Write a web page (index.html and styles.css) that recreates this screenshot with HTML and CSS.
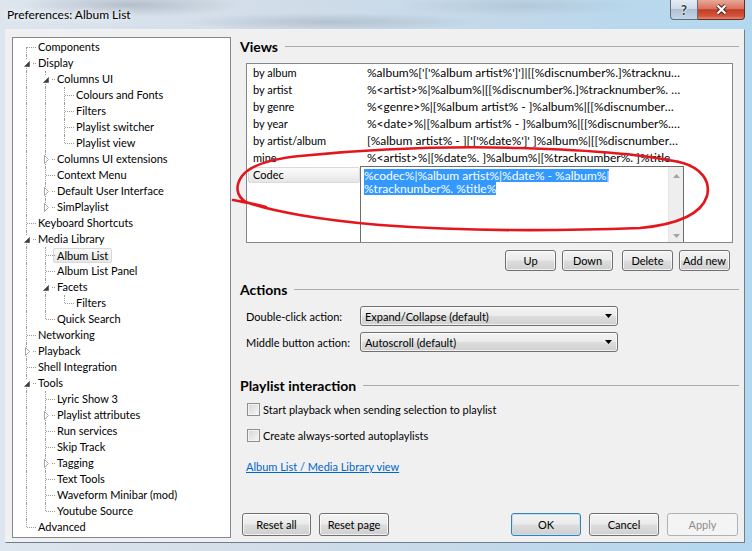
FILE: index.html
```html
<!DOCTYPE html>
<html lang="en">
<head>
    <meta charset="UTF-8">
    <title>Preferences: Album List</title>
    <link rel="stylesheet" href="styles.css">
</head>
<body>
<div class="window">
    <div class="titlebar">
        <span class="title">Preferences: Album List</span>
        <div class="caption">
            <span class="cap-btn help">?</span>
            <span class="cap-btn close">
                <svg width="13" height="11" viewBox="0 0 13 11"><path d="M2.5 1.5 L10.5 9.5 M10.5 1.5 L2.5 9.5" stroke="#4a2520" stroke-width="4"/><path d="M2.5 1.5 L10.5 9.5 M10.5 1.5 L2.5 9.5" stroke="#fff" stroke-width="2.2"/></svg>
            </span>
        </div>
    </div>

    <div class="client">
        <div class="tree">
            <div class="node"><i class="c first"></i><span class="t">Components</span></div>
            <div class="node"><i class="c"><span class="exp"><svg width="10" height="9"><path d="M6.5 2.5 L6.5 7.5 L1.5 7.5 Z" fill="#3c3c3c" stroke="#5a5a5a" stroke-width="0.8"/></svg></span></i><span class="t">Display</span></div>
            <div class="node"><i class="g"></i><i class="c"><span class="exp"><svg width="10" height="9"><path d="M6.5 2.5 L6.5 7.5 L1.5 7.5 Z" fill="#3c3c3c" stroke="#5a5a5a" stroke-width="0.8"/></svg></span></i><span class="t">Columns UI</span></div>
            <div class="node"><i class="g"></i><i class="g"></i><i class="c"></i><span class="t">Colours and Fonts</span></div>
            <div class="node"><i class="g"></i><i class="g"></i><i class="c"></i><span class="t">Filters</span></div>
            <div class="node"><i class="g"></i><i class="g"></i><i class="c"></i><span class="t">Playlist switcher</span></div>
            <div class="node"><i class="g"></i><i class="g"></i><i class="c last"></i><span class="t">Playlist view</span></div>
            <div class="node"><i class="g"></i><i class="c"><span class="exp"><svg width="10" height="9"><path d="M2.5 0.5 L6.5 4.5 L2.5 8.5 Z" fill="#fff" stroke="#a6a6a6"/></svg></span></i><span class="t">Columns UI extensions</span></div>
            <div class="node"><i class="g"></i><i class="c"></i><span class="t">Context Menu</span></div>
            <div class="node"><i class="g"></i><i class="c"><span class="exp"><svg width="10" height="9"><path d="M2.5 0.5 L6.5 4.5 L2.5 8.5 Z" fill="#fff" stroke="#a6a6a6"/></svg></span></i><span class="t">Default User Interface</span></div>
            <div class="node"><i class="g"></i><i class="c last"><span class="exp"><svg width="10" height="9"><path d="M2.5 0.5 L6.5 4.5 L2.5 8.5 Z" fill="#fff" stroke="#a6a6a6"/></svg></span></i><span class="t">SimPlaylist</span></div>
            <div class="node"><i class="c"></i><span class="t">Keyboard Shortcuts</span></div>
            <div class="node"><i class="c"><span class="exp"><svg width="10" height="9"><path d="M6.5 2.5 L6.5 7.5 L1.5 7.5 Z" fill="#3c3c3c" stroke="#5a5a5a" stroke-width="0.8"/></svg></span></i><span class="t">Media Library</span></div>
            <div class="node"><i class="g"></i><i class="c"></i><span class="t sel">Album List</span></div>
            <div class="node"><i class="g"></i><i class="c"></i><span class="t">Album List Panel</span></div>
            <div class="node"><i class="g"></i><i class="c"><span class="exp"><svg width="10" height="9"><path d="M6.5 2.5 L6.5 7.5 L1.5 7.5 Z" fill="#3c3c3c" stroke="#5a5a5a" stroke-width="0.8"/></svg></span></i><span class="t">Facets</span></div>
            <div class="node"><i class="g"></i><i class="g"></i><i class="c last"></i><span class="t">Filters</span></div>
            <div class="node"><i class="g"></i><i class="c last"></i><span class="t">Quick Search</span></div>
            <div class="node"><i class="c"></i><span class="t">Networking</span></div>
            <div class="node"><i class="c"><span class="exp"><svg width="10" height="9"><path d="M2.5 0.5 L6.5 4.5 L2.5 8.5 Z" fill="#fff" stroke="#a6a6a6"/></svg></span></i><span class="t">Playback</span></div>
            <div class="node"><i class="c"></i><span class="t">Shell Integration</span></div>
            <div class="node"><i class="c"><span class="exp"><svg width="10" height="9"><path d="M6.5 2.5 L6.5 7.5 L1.5 7.5 Z" fill="#3c3c3c" stroke="#5a5a5a" stroke-width="0.8"/></svg></span></i><span class="t">Tools</span></div>
            <div class="node"><i class="g"></i><i class="c"></i><span class="t">Lyric Show 3</span></div>
            <div class="node"><i class="g"></i><i class="c"><span class="exp"><svg width="10" height="9"><path d="M2.5 0.5 L6.5 4.5 L2.5 8.5 Z" fill="#fff" stroke="#a6a6a6"/></svg></span></i><span class="t">Playlist attributes</span></div>
            <div class="node"><i class="g"></i><i class="c"></i><span class="t">Run services</span></div>
            <div class="node"><i class="g"></i><i class="c"></i><span class="t">Skip Track</span></div>
            <div class="node"><i class="g"></i><i class="c"><span class="exp"><svg width="10" height="9"><path d="M2.5 0.5 L6.5 4.5 L2.5 8.5 Z" fill="#fff" stroke="#a6a6a6"/></svg></span></i><span class="t">Tagging</span></div>
            <div class="node"><i class="g"></i><i class="c"></i><span class="t">Text Tools</span></div>
            <div class="node"><i class="g"></i><i class="c"></i><span class="t">Waveform Minibar (mod)</span></div>
            <div class="node"><i class="g"></i><i class="c last"></i><span class="t">Youtube Source</span></div>
            <div class="node"><i class="c last"></i><span class="t">Advanced</span></div>
        </div>

        <div class="pane">
            <div class="group-title">Views</div>
            <div class="views">
                <div class="vrow"><span class="vname">by album</span><span class="vfmt">%album%['['%album artist%']']|[[%discnumber%.]%tracknumber%. ][%track artist% - ]%title%</span></div>
                <div class="vrow"><span class="vname">by artist</span><span class="vfmt">%&lt;artist&gt;%|%album%|[[%discnumber%.]%tracknumber%. ][%track artist% - ]%title%</span></div>
                <div class="vrow"><span class="vname">by genre</span><span class="vfmt">%&lt;genre&gt;%|[%album artist% - ]%album%|[[%discnumber%.]%tracknumber%. ]%title%</span></div>
                <div class="vrow"><span class="vname">by year</span><span class="vfmt">%&lt;date&gt;%|[%album artist% - ]%album%|[[%discnumber%.]%tracknumber%. ]%title%</span></div>
                <div class="vrow"><span class="vname">by artist/album</span><span class="vfmt">[%album artist% - ]['['%date%']' ]%album%|[[%discnumber%.]%tracknumber%. ]%title%</span></div>
                <div class="vrow"><span class="vname">mine</span><span class="vfmt">%&lt;artist&gt;%|[%date%. ]%album%|[%tracknumber%. ]%title%|[%track artist%]</span></div>
                <div class="vrow editing">
                    <span class="vname sel">Codec</span>
                    <div class="edit">
                        <div class="edit-text"><span class="hl">%codec%|%album artist%|%date% - %album%|</span><br><span class="hl">%tracknumber%. %title%</span></div>
                        <div class="vscroll">
                            <svg width="7" height="4"><path d="M0 4 L3.5 0 L7 4 Z" fill="#a3a3a3"/></svg>
                            <svg width="7" height="4"><path d="M0 0 L3.5 4 L7 0 Z" fill="#a3a3a3"/></svg>
                        </div>
                    </div>
                </div>
            </div>
            <div class="list-buttons">
                <button class="btn">Up</button>
                <button class="btn">Down</button>
                <button class="btn delete">Delete</button>
                <button class="btn">Add new</button>
            </div>

            <div class="group-title actions">Actions</div>
            <div class="field first">
                <span class="field-label">Double-click action:</span>
                <div class="combo"><span>Expand/Collapse (default)</span><svg width="7" height="4"><path d="M0 0 L7 0 L3.5 4 Z" fill="#000"/></svg></div>
            </div>
            <div class="field">
                <span class="field-label">Middle button action:</span>
                <div class="combo"><span>Autoscroll (default)</span><svg width="7" height="4"><path d="M0 0 L7 0 L3.5 4 Z" fill="#000"/></svg></div>
            </div>

            <div class="group-title playlist">Playlist interaction</div>
            <div class="check first"><span class="box"></span>Start playback when sending selection to playlist</div>
            <div class="check"><span class="box"></span>Create always-sorted autoplaylists</div>
            <div class="link-row"><a class="link" href="#">Album List / Media Library view</a></div>

            <div class="dialog-buttons">
                <button class="btn wide reset-all">Reset all</button>
                <button class="btn wide">Reset page</button>
                <span class="spacer"></span>
                <button class="btn wide default">OK</button>
                <button class="btn wide">Cancel</button>
                <button class="btn wide disabled apply">Apply</button>
            </div>
        </div>
    </div>

    <svg class="markup" width="752" height="551" viewBox="0 0 752 551">
        <path d="M300 156 C270 159 250 166 242 176 C235 186 236 196 246 202 C270 211 320 220 380 225 C460 231 560 231 640 228 C682 224 702 212 707 196 C711 180 700 168 683 163 C650 155 590 150 520 148 C450 146 380 148 300 156 Z M233 200 C242 202 252 203 266 207" fill="none" stroke="#e3161e" stroke-width="2.6" stroke-linecap="round"/>
    </svg>
</div>
</body>
</html>
```

FILE: styles.css
```css
* {
    box-sizing: border-box;
}

body {
    margin: 0;
    font-family: Lato, "Liberation Sans", sans-serif;
    font-size: 11px;
    color: #000;
}

.window {
    position: relative;
    width: 752px;
    height: 551px;
    display: flex;
    flex-direction: column;
    padding: 0 7px 8px 5px;
    background:
        radial-gradient(ellipse 110px 12px at 130px 5px, rgba(140, 150, 165, 0.45), transparent),
        radial-gradient(ellipse 150px 9px at 330px 22px, rgba(130, 145, 160, 0.35), transparent),
        radial-gradient(ellipse 120px 10px at 520px 6px, rgba(150, 165, 180, 0.3), transparent),
        linear-gradient(to right, #dde5ee 0%, #d0dce8 40%, #c0d8ea 70%, #b2d8ef 100%);
}

/* title bar */
.titlebar {
    height: 29px;
    display: flex;
    justify-content: space-between;
}

.title {
    padding-left: 2px;
    line-height: 29px;
    font-size: 12px;
    text-shadow: 0 0 6px #fff, 0 0 10px #fff;
}

.caption {
    display: flex;
    height: 20px;
}

.cap-btn {
    display: flex;
    align-items: center;
    justify-content: center;
    height: 20px;
    border: 1px solid #5f6f80;
    border-top: 0;
}

.help {
    width: 28px;
    border-radius: 0 0 0 4px;
    background: linear-gradient(#e4ecf4 0%, #cfdae6 45%, #afc0d3 50%, #c4d5e6 100%);
    font-weight: bold;
    font-size: 13px;
    color: #2f3a46;
    text-shadow: 0 0 2px #fff, 0 0 2px #fff;
}

.close {
    width: 47px;
    border-left: 0;
    border-color: #6b2a20;
    border-radius: 0 0 4px 0;
    background: linear-gradient(#e9a898 0%, #d9725f 45%, #c33c22 52%, #d2573d 85%, #e28a6e 100%);
}

/* client area */
.client {
    flex: 1;
    display: flex;
    gap: 5px;
    padding: 7px 0 4px 6px;
    background: #f0f0f0;
    border: 1px solid;
    border-color: #eef2f6 #6e7e8f #6e7e8f #eef2f6;
}

.tree {
    flex: 0 0 219px;
    background: #fff;
    border: 1px solid #828790;
    padding: 1px 0 0 4px;
}

.node {
    display: flex;
    height: 16px;
    white-space: nowrap;
}

.g,
.c {
    position: relative;
    flex: 0 0 19px;
}

.g::before,
.c::before {
    content: "";
    position: absolute;
    left: 9px;
    top: 0;
    bottom: 0;
    border-left: 1px dotted #9a9a9a;
}

.c.first::before {
    top: 8px;
}

.c.last::before {
    bottom: 8px;
}

.c::after {
    content: "";
    position: absolute;
    left: 10px;
    right: 0;
    top: 8px;
    border-top: 1px dotted #9a9a9a;
}

.exp {
    position: absolute;
    left: 6px;
    top: 4px;
    width: 10px;
    height: 9px;
    background: #fff;
    z-index: 1;
}

.exp svg {
    display: block;
}

.t {
    padding: 0 2px;
    line-height: 16px;
}

.t.sel {
    margin: 1px 0 0 -2px;
    padding: 0 3px;
    height: 15px;
    line-height: 13px;
    border: 1px solid #d9d9d9;
    border-radius: 2px;
    background: linear-gradient(#fafafa, #e6e6e6);
}

/* right pane */
.pane {
    flex: 1;
    display: flex;
    flex-direction: column;
}

.group-title {
    display: flex;
    align-items: center;
    height: 18px;
    padding-left: 4px;
    margin-right: 5px;
    font-weight: bold;
    font-size: 14px;
}

.group-title::after {
    content: "";
    flex: 1;
    border-top: 1px solid #a9adb2;
    margin: 1px 0 0 7px;
}

.views {
    margin: 8px 0 0 10px;
    width: 487px;
    height: 180px;
    border: 1px solid #828790;
    background: #fff;
}

.vrow {
    display: grid;
    grid-template-columns: 113px 324px;
    height: 17px;
    line-height: 17px;
    white-space: nowrap;
}

.vname {
    padding-left: 6px;
}

.vfmt {
    padding: 0 3px 0 7px;
    font-size: 12px;
    overflow: hidden;
    text-overflow: ellipsis;
}

.vrow.editing {
    height: 76px;
    align-items: start;
}

.vname.sel {
    margin: 1px 0 0 1px;
    height: 16px;
    line-height: 14px;
    padding-left: 4px;
    border: 1px solid #dadada;
    border-radius: 2px;
    background: linear-gradient(#fbfbfb, #e6e6e6);
}

.edit {
    display: flex;
    height: 76px;
    border: 1px solid #6d6d6d;
    border-bottom: 0;
    background: #fff;
}

.edit-text {
    flex: 1;
    padding: 2px 0 0 3px;
    font-size: 12px;
    line-height: 13px;
}

.hl {
    display: inline-block;
    line-height: 13px;
    background: #3399ff;
    color: #fff;
}

.vscroll {
    width: 15px;
    display: flex;
    flex-direction: column;
    justify-content: space-between;
    align-items: center;
    padding: 7px 0 4px;
    background: #eeeeee;
    border-left: 1px solid #e4e4e4;
}

.btn {
    height: 21px;
    padding: 0;
    font: inherit;
    color: #000;
    border: 1px solid #707070;
    border-radius: 3px;
    background: linear-gradient(#f3f3f3 0%, #ebebeb 48%, #dddddd 52%, #cfcfcf 100%);
    box-shadow: inset 0 0 0 1px rgba(255, 255, 255, 0.7);
}

.list-buttons {
    display: flex;
    justify-content: flex-end;
    gap: 6px;
    margin: 7px 14px 0 0;
}

.list-buttons .btn {
    width: 51px;
}

.list-buttons .delete {
    margin-left: 3px;
}

.group-title.actions {
    margin-top: 9px;
}

.field {
    display: flex;
    align-items: center;
    height: 20px;
    margin-top: 6px;
    padding-left: 10px;
}

.field.first {
    margin-top: 8px;
}

.field-label {
    width: 114px;
}

.combo {
    width: 258px;
    height: 20px;
    display: flex;
    align-items: center;
    justify-content: space-between;
    padding: 0 5px 0 4px;
    border: 1px solid #707070;
    border-radius: 3px;
    background: linear-gradient(#f3f3f3 0%, #ebebeb 48%, #dddddd 52%, #cfcfcf 100%);
    box-shadow: inset 0 0 0 1px rgba(255, 255, 255, 0.7);
}

.group-title.playlist {
    margin-top: 24px;
}

.check {
    display: flex;
    align-items: center;
    gap: 3px;
    height: 16px;
    margin-top: 10px;
    padding-left: 11px;
}

.check.first {
    margin-top: 7px;
}

.box {
    width: 13px;
    height: 13px;
    border: 1px solid #8e8f8f;
    background: linear-gradient(135deg, #d2d4d6, #f7f7f7);
    box-shadow: inset 0 0 0 1px #f4f4f4;
}

.link-row {
    height: 16px;
    line-height: 16px;
    margin-top: 16px;
    padding-left: 10px;
}

.link {
    color: #0066cc;
}

.dialog-buttons {
    display: flex;
    gap: 8px;
    margin: auto 6px 2px 6px;
}

.dialog-buttons .btn {
    width: 70px;
    height: 23px;
}

.dialog-buttons .reset-all {
    width: 69px;
}

.dialog-buttons .apply {
    width: 71px;
}

.spacer {
    flex: 1;
}

.btn.default {
    border-color: #3c7fb1;
    box-shadow: inset 0 0 0 1px #bfe3f6;
}

.btn.disabled {
    color: #8c8c8c;
    border-color: #adb2b5;
    background: #f4f4f4;
    box-shadow: none;
}

/* red hand-drawn annotation on top of the dialog */
.markup {
    position: absolute;
    left: 0;
    top: 0;
    pointer-events: none;
}
```
